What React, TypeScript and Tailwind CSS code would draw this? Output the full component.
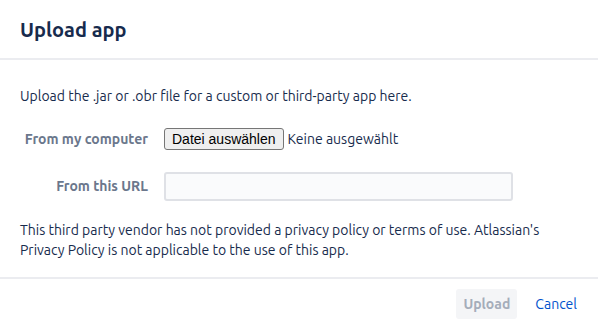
export default function App() {
  return (
    <div className="w-[598px] h-[326px] bg-white text-[#172b4d] text-[14px] font-['Ubuntu','Noto_Sans',sans-serif] flex flex-col">
      <div className="h-[60px] px-5 flex items-center border-b-2 border-[#ebecf0]">
        <h2 className="text-[20px] font-semibold leading-6 pt-[2px]">Upload app</h2>
      </div>
      <div className="flex-1 px-5 pt-[26px]">
        <p className="leading-5">Upload the .jar or .obr file for a custom or third-party app here.</p>
        <div className="mt-[22px] flex items-center h-[22px]">
          <label className="w-[128px] text-right text-[#6b778c] font-semibold">From my computer</label>
          <button className="ml-4 h-[22px] px-[7px] font-['Liberation_Sans',sans-serif] text-[14px] leading-none border border-[#767676] rounded-[3px] bg-[#efefef] text-black">Datei auswählen</button>
          <span className="ml-1 text-[#172b4d]">Keine ausgewählt</span>
        </div>
        <div className="mt-[22px] flex items-center">
          <label className="w-[128px] text-right text-[#6b778c] font-semibold">From this URL</label>
          <input type="text" className="ml-4 w-[349px] h-[29px] rounded-[3px] border-2 border-[#dfe1e6] bg-[#fafbfc]" />
        </div>
        <p className="mt-[19px] leading-5">This third party vendor has not provided a privacy policy or terms of use. Atlassian's Privacy Policy is not applicable to the use of this app.</p>
      </div>
      <div className="h-[49px] border-t-2 border-[#ebecf0] flex items-center justify-end pr-[21px] gap-[18px] pt-[3px]">
        <button className="h-[30px] w-[61px] rounded-[3px] bg-[#f4f5f7] text-[#a5adba] font-semibold">Upload</button>
        <button className="text-[#0052cc]">Cancel</button>
      </div>
    </div>
  );
}
